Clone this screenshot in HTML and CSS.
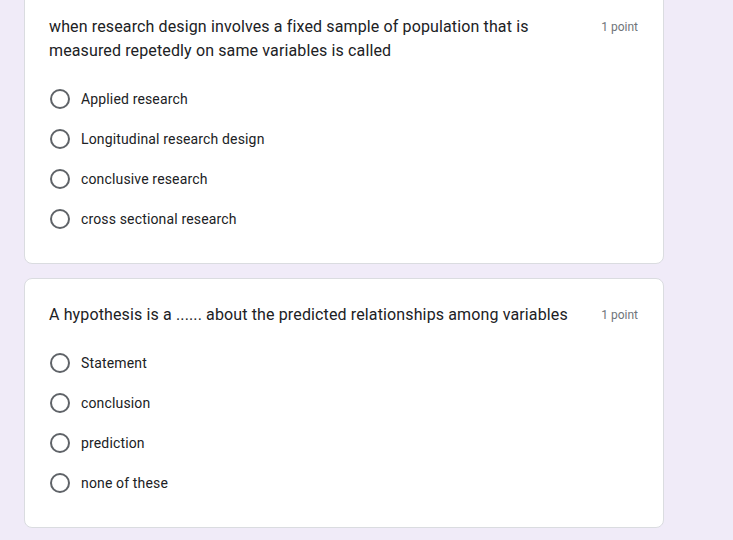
FILE: index.html
```html
<!DOCTYPE html>
<html>
<head>
<meta charset="utf-8">
<link rel="stylesheet" href="styles.css">
</head>
<body>
<div class="form">
  <div class="card first">
    <div class="q-head">
      <div class="q-title">when research design involves a fixed sample of population that is measured repetedly on same variables is called</div>
      <div class="q-points">1 point</div>
    </div>
    <div class="options">
      <div class="option"><span class="radio"></span><span class="label">Applied research</span></div>
      <div class="option"><span class="radio"></span><span class="label">Longitudinal research design</span></div>
      <div class="option"><span class="radio"></span><span class="label">conclusive research</span></div>
      <div class="option"><span class="radio"></span><span class="label">cross sectional research</span></div>
    </div>
  </div>
  <div class="card">
    <div class="q-head">
      <div class="q-title">A hypothesis is a ...... about the predicted relationships among variables</div>
      <div class="q-points">1 point</div>
    </div>
    <div class="options">
      <div class="option"><span class="radio"></span><span class="label">Statement</span></div>
      <div class="option"><span class="radio"></span><span class="label">conclusion</span></div>
      <div class="option"><span class="radio"></span><span class="label">prediction</span></div>
      <div class="option"><span class="radio"></span><span class="label">none of these</span></div>
    </div>
  </div>
</div>
</body>
</html>
```
FILE: styles.css
```css
html, body {
  margin: 0;
  padding: 0;
  background: #f0ebf8;
  font-family: Roboto, "Liberation Sans", Arial, sans-serif;
  color: #202124;
}
.form {
  width: 640px;
  margin: -10px 0 0 24px;
  display: flex;
  flex-direction: column;
  gap: 14px;
}
.card {
  background: #fff;
  border: 1px solid #dadce0;
  border-radius: 8px;
  padding: 24px;
}
.q-head {
  display: flex;
  align-items: flex-start;
}
.q-title {
  flex: 1;
  font-size: 16px;
  line-height: 24px;
  letter-spacing: 0.13px;
  padding-right: 24px;
  max-width: 520px;
}
.q-points {
  margin-left: auto;
  font-size: 12px;
  line-height: 24px;
  color: #70757a;
  letter-spacing: 0;
  padding-right: 1px;
}
.options {
  margin-top: 16px;
  display: flex;
  flex-direction: column;
}
.option {
  height: 40px;
  display: flex;
  align-items: center;
}
.radio {
  box-sizing: border-box;
  width: 20px;
  height: 20px;
  border: 2px solid #5f6368;
  border-radius: 50%;
  margin-left: 1px;
  margin-right: 11px;
  flex: none;
}
.label {
  font-size: 14px;
  letter-spacing: 0.15px;
  line-height: 20px;
}
```
